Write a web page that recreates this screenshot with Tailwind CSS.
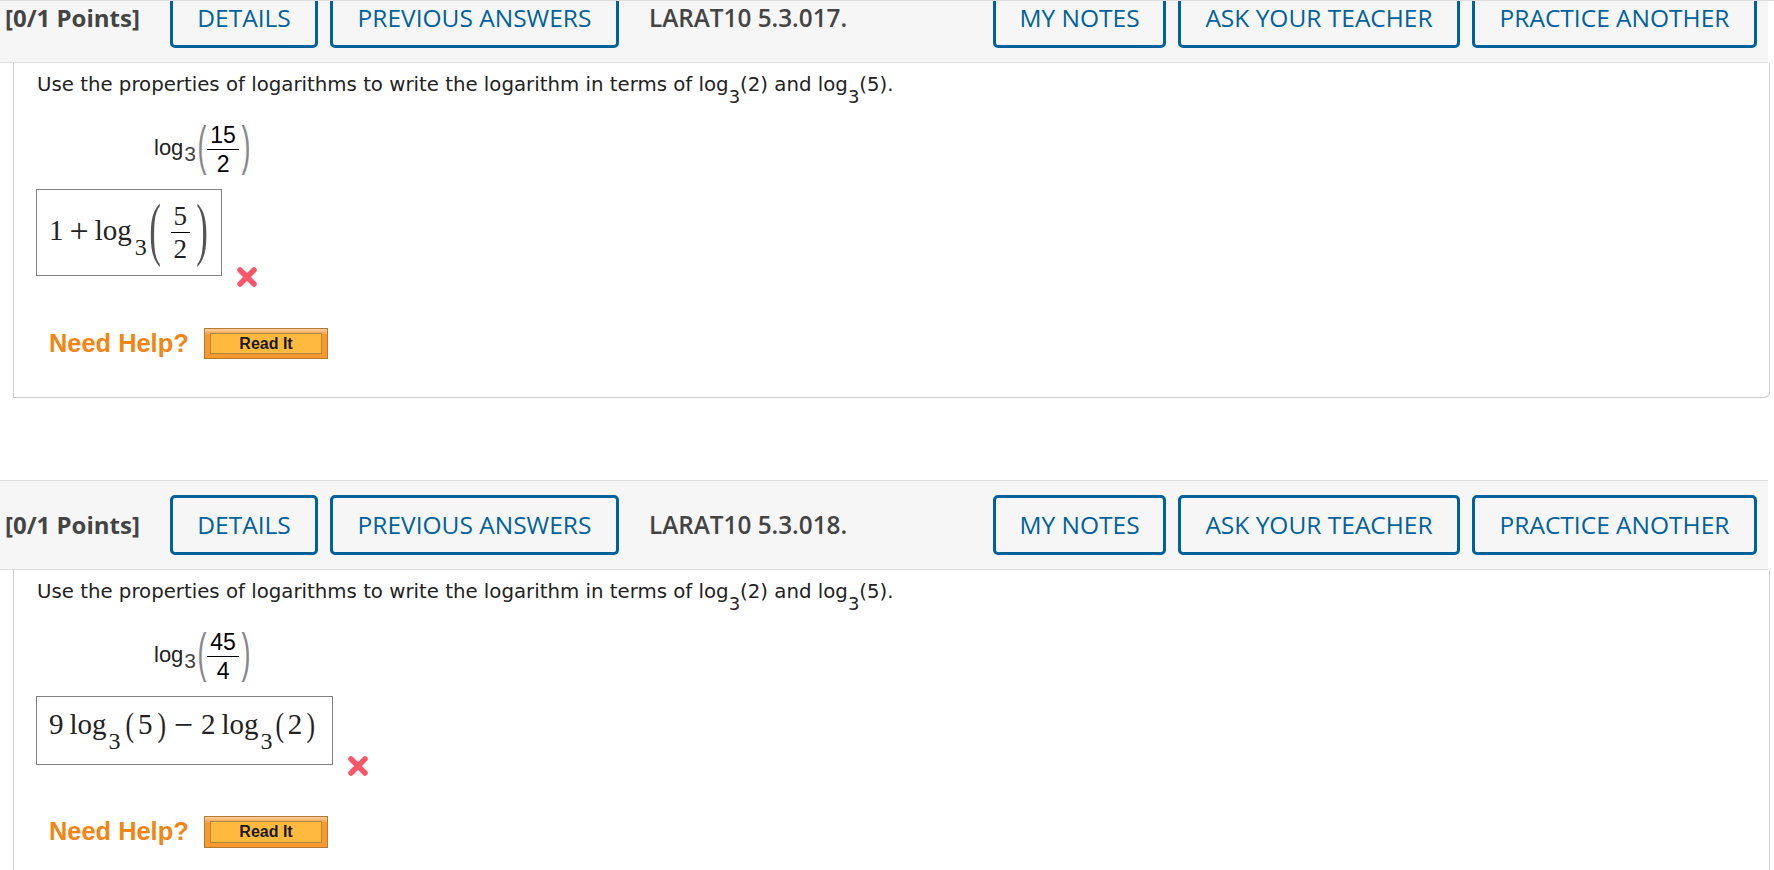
<!DOCTYPE html>
<html lang="en">
  <head>
    <meta charset="UTF-8" />
    <title>LARAT10 5.3</title>
    <script src="https://cdn.jsdelivr.net/npm/@tailwindcss/browser@4"></script>
  </head>
  <body class="bg-white h-[870px] overflow-hidden relative font-['DejaVu_Sans',sans-serif]">
    <div class="absolute top-0 left-0 w-full h-px bg-[#dddddd] z-10"></div>
    <div class="-mt-[27px]">
      <!-- question 17 -->
      <section class="mb-[82px]">
        <header class="w-[1768px] h-[90px] bg-[#f6f6f6] border-t border-b border-[#dddddd] flex items-center pl-[5px] pr-[11px] font-['Open_Sans',sans-serif] text-[24.5px]">
          <span class="w-[165px] font-bold text-[#444444] text-[24px]">[0/1 Points]</span>
          <a class="h-[60px] w-[148px] flex items-center justify-center border-[3px] border-[#00629b] rounded-[5px] text-[#00629b]">DETAILS</a>
          <a class="ml-[12px] h-[60px] w-[289px] flex items-center justify-center border-[3px] border-[#00629b] rounded-[5px] text-[#00629b]">PREVIOUS ANSWERS</a>
          <span class="ml-[30px] font-semibold text-[#444444] text-[24.3px]">LARAT10 5.3.017.</span>
          <a class="ml-auto h-[60px] w-[173px] flex items-center justify-center border-[3px] border-[#00629b] rounded-[5px] text-[#00629b]">MY NOTES</a>
          <a class="ml-[12px] h-[60px] w-[282px] flex items-center justify-center border-[3px] border-[#00629b] rounded-[5px] text-[#00629b]">ASK YOUR TEACHER</a>
          <a class="ml-[12px] h-[60px] w-[285px] flex items-center justify-center border-[3px] border-[#00629b] rounded-[5px] text-[#00629b]">PRACTICE ANOTHER</a>
        </header>
        <div class="ml-[13px] w-[1757px] h-[335px] border-l border-r border-b border-[#cccccc] rounded-br-[6px] pl-[22px] pt-[8px] text-[#222222]">
          <p class="ml-px text-[19.75px] leading-[28px] h-[28px]">Use the properties of logarithms to write the logarithm in terms of log<sub class="text-[18px] align-[-7px] leading-none">3</sub>(2) and log<sub class="text-[18px] align-[-7px] leading-none">3</sub>(5).</p>
          <div class="mt-[23px] ml-[118px] h-[54px] flex items-center text-[22px] font-['Liberation_Sans',sans-serif]">
            <span class="-mt-[4px]">log</span><span class="self-end mb-[7px] ml-px text-[21px] text-[#444444] font-light">3</span>
            <span class="text-[54px] font-light text-[#888888] leading-none -mt-[8px] scale-x-50 w-[12px] flex justify-center">(</span>
            <span class="flex flex-col items-center -ml-[1px] w-[32px] text-[23px] leading-[28px] text-black">
              <span class="border-b border-black w-full text-center">15</span>
              <span>2</span>
            </span>
            <span class="ml-[1px] text-[54px] font-light text-[#888888] leading-none -mt-[8px] scale-x-50 w-[12px] flex justify-center">)</span>
          </div>
          <div class="mt-[13px] flex items-end font-['Liberation_Serif',serif] text-[29px] text-[#222222]">
            <div class="h-[87px] w-[186px] border border-[#808080] flex items-center pl-[12px]">
              <span class="-mt-[4px]">1</span><span class="-mt-[4px] ml-[6px] mr-[6px] text-[34px] font-light">+</span><span class="-mt-[4px]">log</span>
              <span class="text-[24px] mt-[29px] ml-[3px]">3</span>
              <span class="text-[70px] font-light leading-none text-[#555555] scale-x-50 w-[12px] flex justify-center -mt-[8px] ml-[2px]">(</span>
              <span class="flex flex-col items-center ml-[10px] w-[19px] text-[27px] leading-[32px]">
                <span class="border-b border-black w-full text-center">5</span>
                <span>2</span>
              </span>
              <span class="ml-[6px] text-[70px] font-light leading-none text-[#555555] scale-x-50 w-[12px] flex justify-center -mt-[8px]">)</span>
            </div>
            <svg class="ml-[15px] -mb-[11px]" width="20" height="20" viewBox="0 0 20 20"><path d="M3 3 17 17M17 3 3 17" stroke="#f9566a" stroke-width="5.5" stroke-linecap="round" /></svg>
          </div>
          <div class="mt-[49px] ml-[13px] flex items-center">
            <span class="w-[155px] -mt-[1px] font-['Liberation_Sans',sans-serif] font-bold text-[25.4px] text-[#f28513]">Need Help?</span>
            <a class="w-[124px] h-[31px] bg-linear-to-b from-[#fbd0a0] via-[#f7992f] via-20% to-[#f7992f] border border-[#b57a30] px-[5px] py-[4px] flex">
              <span class="flex-1 bg-[#ffb93f] border border-[#b08a44] flex items-center justify-center font-['Liberation_Sans',sans-serif] font-bold text-[16px] text-[#1a1a1a]">Read It</span>
            </a>
          </div>
        </div>
      </section>

      <!-- question 18 -->
      <section>
        <header class="w-[1768px] h-[90px] bg-[#f6f6f6] border-t border-b border-[#dddddd] flex items-center pl-[5px] pr-[11px] font-['Open_Sans',sans-serif] text-[24.5px]">
          <span class="w-[165px] font-bold text-[#444444] text-[24px]">[0/1 Points]</span>
          <a class="h-[60px] w-[148px] flex items-center justify-center border-[3px] border-[#00629b] rounded-[5px] text-[#00629b]">DETAILS</a>
          <a class="ml-[12px] h-[60px] w-[289px] flex items-center justify-center border-[3px] border-[#00629b] rounded-[5px] text-[#00629b]">PREVIOUS ANSWERS</a>
          <span class="ml-[30px] font-semibold text-[#444444] text-[24.3px]">LARAT10 5.3.018.</span>
          <a class="ml-auto h-[60px] w-[173px] flex items-center justify-center border-[3px] border-[#00629b] rounded-[5px] text-[#00629b]">MY NOTES</a>
          <a class="ml-[12px] h-[60px] w-[282px] flex items-center justify-center border-[3px] border-[#00629b] rounded-[5px] text-[#00629b]">ASK YOUR TEACHER</a>
          <a class="ml-[12px] h-[60px] w-[285px] flex items-center justify-center border-[3px] border-[#00629b] rounded-[5px] text-[#00629b]">PRACTICE ANOTHER</a>
        </header>
        <div class="ml-[13px] w-[1757px] h-[335px] border-l border-r border-[#cccccc] pl-[22px] pt-[8px] text-[#222222]">
          <p class="ml-px text-[19.75px] leading-[28px] h-[28px]">Use the properties of logarithms to write the logarithm in terms of log<sub class="text-[18px] align-[-7px] leading-none">3</sub>(2) and log<sub class="text-[18px] align-[-7px] leading-none">3</sub>(5).</p>
          <div class="mt-[23px] ml-[118px] h-[54px] flex items-center text-[22px] font-['Liberation_Sans',sans-serif]">
            <span class="-mt-[4px]">log</span><span class="self-end mb-[7px] ml-px text-[21px] text-[#444444] font-light">3</span>
            <span class="text-[54px] font-light text-[#888888] leading-none -mt-[8px] scale-x-50 w-[12px] flex justify-center">(</span>
            <span class="flex flex-col items-center -ml-[1px] w-[32px] text-[23px] leading-[28px] text-black">
              <span class="border-b border-black w-full text-center">45</span>
              <span>4</span>
            </span>
            <span class="ml-[1px] text-[54px] font-light text-[#888888] leading-none -mt-[8px] scale-x-50 w-[12px] flex justify-center">)</span>
          </div>
          <div class="mt-[13px] flex items-end font-['Liberation_Serif',serif] text-[29px] text-[#222222]">
            <div class="h-[69px] w-[297px] border border-[#808080] flex items-center pl-[12px]">
              <span class="-mt-[12px]">9</span><span class="-mt-[12px] ml-[6px]">log</span>
              <span class="text-[24px] mt-[20px] ml-[2px]">3</span>
              <span class="-mt-[12px] text-[34px] font-light ml-[3px] scale-x-75">(</span><span class="-mt-[12px] ml-[3px]">5</span><span class="-mt-[12px] text-[34px] font-light ml-[4px] scale-x-75">)</span>
              <span class="-mt-[12px] ml-[6px] text-[34px] font-light">−</span><span class="-mt-[12px] ml-[8px]">2</span><span class="-mt-[12px] ml-[6px]">log</span>
              <span class="text-[24px] mt-[20px] ml-[2px]">3</span>
              <span class="-mt-[12px] text-[34px] font-light ml-[2px] scale-x-75">(</span><span class="-mt-[12px] ml-[2px]">2</span><span class="-mt-[12px] text-[34px] font-light ml-[3px] scale-x-75">)</span>
            </div>
            <svg class="ml-[15px] -mb-[11px]" width="20" height="20" viewBox="0 0 20 20"><path d="M3 3 17 17M17 3 3 17" stroke="#f9566a" stroke-width="5.5" stroke-linecap="round" /></svg>
          </div>
          <div class="mt-[48px] ml-[13px] flex items-center">
            <span class="w-[155px] -mt-[1px] font-['Liberation_Sans',sans-serif] font-bold text-[25.4px] text-[#f28513]">Need Help?</span>
            <a class="w-[124px] h-[32px] bg-linear-to-b from-[#fbd0a0] via-[#f7992f] via-20% to-[#f7992f] border border-[#b57a30] px-[5px] py-[4px] flex">
              <span class="flex-1 bg-[#ffb93f] border border-[#b08a44] flex items-center justify-center font-['Liberation_Sans',sans-serif] font-bold text-[16px] text-[#1a1a1a]">Read It</span>
            </a>
          </div>
        </div>
      </section>
    </div>
  </body>
</html>
